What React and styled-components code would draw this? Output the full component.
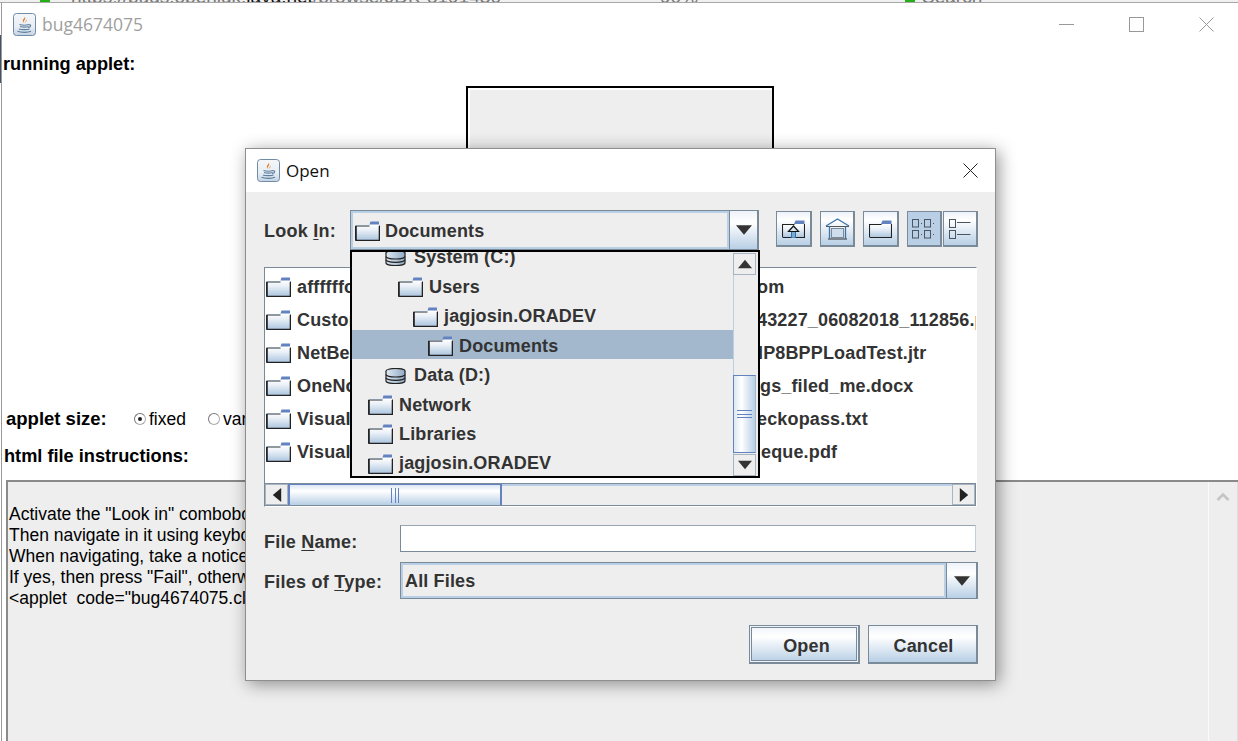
import React from "react";
import styled, { createGlobalStyle } from "styled-components";

const GlobalStyle = createGlobalStyle`
  html, body {
    margin: 0;
    padding: 0;
    background: #fff;
  }
  * {
    box-sizing: border-box;
  }
`;

const Desktop = styled.div`
  position: relative;
  width: 1238px;
  height: 741px;
  overflow: hidden;
  display: flex;
  flex-direction: column;
  background: #fff;
  font-family: "Liberation Sans", Arial, sans-serif;
`;

const BrowserStrip = styled.div`
  height: 3px;
  flex: none;
  overflow: hidden;
  display: flex;
  align-items: flex-end;
  background: #f0f0f0;
  border-bottom: 1px solid #a8a8a8;
  font-size: 19px;
  line-height: 20px;
  white-space: nowrap;
`;

const StripCell = styled.span`
  flex: none;
  width: ${(p) => p.$width}px;
  margin-bottom: -5px;
  color: #777;

  b {
    font-weight: 400;
    color: #111;
  }
`;

const StripMark = styled.span`
  flex: none;
  width: ${(p) => p.$width}px;
  height: 3px;
  margin-right: ${(p) => p.$after}px;
  background: #22b014;
`;

const WindowRow = styled.div`
  flex: 1;
  min-height: 0;
  display: flex;
`;

const Gutter = styled.div`
  width: 1px;
  flex: none;
  background: linear-gradient(#fff 32px, #3f5468 32px, #3f5468 80px, #fff 80px);
`;

const AppWindow = styled.div`
  flex: 1;
  min-width: 0;
  display: flex;
  flex-direction: column;
  border-left: 1px solid #9a9a9a;
  background: #fff;
`;

const TitleBar = styled.div`
  height: 44px;
  flex: none;
  display: flex;
  align-items: center;
  padding: 0 0 0 11px;
  margin-top: -1px;
`;

const TitleText = styled.span`
  font-family: "Open Sans", "Noto Sans", sans-serif;
  font-size: 17.5px;
  color: #a0a0a0;
  margin-left: 6px;
`;

const WindowControls = styled.div`
  margin-left: auto;
  display: flex;
  align-items: center;
  padding-right: 24px;
  gap: 55px;
`;

const Heading = styled.div`
  font-size: 18.2px;
  font-weight: 700;
  color: #000;
  line-height: 22px;
  padding-left: ${(p) => p.$left}px;
  margin-top: ${(p) => p.$top}px;
`;

const AppletFrame = styled.div`
  width: 308px;
  height: 230px;
  flex: none;
  margin: 11px 0 0 464px;
  border: 2px solid #000;
  padding: 2px 0 0 2px;
  background: #fff;
`;

const AppletInner = styled.div`
  width: 100%;
  height: 100%;
  background: #eee;
`;

const SizeRow = styled.div`
  display: flex;
  align-items: center;
  height: 22px;
  margin-top: 92px;
  padding-left: 4px;
  font-size: 17.5px;
  color: #000;
`;

const SizeLabel = styled.span`
  font-size: 18.5px;
  font-weight: 700;
  width: 128px;
`;

const RadioDot = styled.span`
  width: 12px;
  height: 12px;
  border-radius: 50%;
  border: 1px solid #aaa;
  border-top-color: #777;
  border-left-color: #777;
  margin-right: 3px;
  display: flex;
  align-items: center;
  justify-content: center;
  background: #fff;

  &::after {
    content: "";
    width: 4px;
    height: 4px;
    border-radius: 50%;
    background: ${(p) => (p.$on ? "#222" : "transparent")};
  }
`;

const RadioText = styled.span`
  width: ${(p) => p.$width}px;
`;

const InstructionsPane = styled.div`
  flex: 1;
  min-height: 0;
  display: flex;
  margin: 13px 0 0 4px;
  border: 2px solid #8a8a8a;
  border-right: none;
  border-bottom: none;
  background: #eee;
`;

const InstructionsText = styled.div`
  flex: 1;
  padding: 22px 0 0 1px;
  font-size: 17.5px;
  line-height: 20.9px;
  color: #000;
  white-space: pre;
`;

const PaneScroll = styled.div`
  width: 30px;
  flex: none;
  display: flex;
  justify-content: center;
  align-items: flex-start;
  padding-top: 10px;
  background: #eee;
  border-left: 1px solid #fafafa;
  border-right: 1px solid #ddd;
`;

const FileDialog = styled.div`
  position: absolute;
  left: 245px;
  top: 148px;
  width: 751px;
  height: 533px;
  display: flex;
  flex-direction: column;
  border: 1px solid #8e8e8e;
  background: #eee;
  box-shadow: 3px 3px 16px rgba(0, 0, 0, 0.42);
  color: #333;
  font-size: 18px;
  font-weight: 700;
  letter-spacing: 0.15px;
`;

const DialogTitle = styled.div`
  height: 43px;
  flex: none;
  display: flex;
  align-items: center;
  padding: 0 17px 0 11px;
  background: #fff;
  font-family: "Open Sans", "Noto Sans", sans-serif;
  font-size: 17px;
  font-weight: 400;
  letter-spacing: 0;
  color: #111;
`;

const DialogName = styled.span`
  margin-left: 6px;
  flex: 1;
`;

const DialogBody = styled.div`
  flex: 1;
  min-height: 0;
  display: flex;
  flex-direction: column;
  padding: 18px 17px 16px 18px;
`;

const LookRow = styled.div`
  position: relative;
  display: flex;
  align-items: flex-start;
  height: 40px;
`;

const FieldLabel = styled.label`
  width: ${(p) => p.$width}px;
  flex: none;
  line-height: ${(p) => p.$line}px;
  letter-spacing: 0.25px;
  white-space: nowrap;

  u {
    text-underline-offset: 2px;
  }
`;

const Combo = styled.div`
  display: flex;
  flex: none;
  width: ${(p) => p.$width}px;
  height: ${(p) => p.$height}px;
  border: 1px solid #7a8a99;
`;

const ComboValue = styled.div`
  flex: 1;
  min-width: 0;
  display: flex;
  align-items: center;
  gap: 5px;
  padding: 1px 0 0 2px;
  background: #eee;
  border: 2px solid #b8cfe5;
  line-height: 20px;
`;

const ComboArrow = styled.div`
  flex: none;
  width: ${(p) => p.$width}px;
  display: flex;
  align-items: center;
  justify-content: center;
  background: linear-gradient(#eef3f9, #ffffff 30%, #b8cfe5);
  border-left: 1px solid #7a8a99;
  border-right: 1px solid #7a8a99;
`;

const Toolbar = styled.div`
  display: flex;
  margin: 1px 0 0 17px;
  height: 36px;
`;

const ToolButton = styled.div`
  width: ${(p) => p.$width}px;
  height: 36px;
  margin-left: ${(p) => p.$gap ?? 8}px;
  display: flex;
  align-items: center;
  justify-content: center;
  border: 1px solid #7a8a99;
  border-right-width: 2px;
  border-bottom-width: 2px;
  background: ${(p) =>
    p.$active ? "#b8cfe5" : "linear-gradient(#eef3f9, #ffffff 25%, #b8cfe5)"};
`;

const PathPopup = styled.div`
  position: absolute;
  z-index: 2;
  left: 86px;
  top: 40px;
  width: 410px;
  height: 228px;
  display: flex;
  border: 2px solid #000;
  background: #eee;
  overflow: hidden;
`;

const PathList = styled.div`
  flex: 1;
  min-width: 0;
  margin-top: -10.4px;
`;

const PathRow = styled.div`
  height: 29.45px;
  display: flex;
  align-items: center;
  padding: 3px 0 0 ${(p) => 16 + p.$level * 15}px;
  gap: 6px;
  background: ${(p) => (p.$selected ? "#a3b8cc" : "transparent")};
`;

const IconSlot = styled.span`
  width: 25px;
  flex: none;
  display: flex;
  justify-content: center;
  align-items: center;
`;

const VerticalScroll = styled.div`
  width: 23px;
  flex: none;
  display: flex;
  flex-direction: column;
  margin-right: 2px;
  padding-top: 1px;
`;

const ScrollButton = styled.div`
  flex: none;
  display: flex;
  align-items: center;
  justify-content: center;
  height: ${(p) => p.$h || 22}px;
  width: ${(p) => p.$w || "100%"};
  background: #eee;
  border: 1px solid #fff;
  outline: 1px solid #a8b4c0;
  outline-offset: -1px;
`;

const ScrollTrack = styled.div`
  flex: 1;
  min-height: 0;
  display: flex;
  flex-direction: column;
  padding-top: 100px;
  background: #eee;
  border-left: 1px solid #b8cfe5;
`;

const VerticalThumb = styled.div`
  height: 78px;
  flex: none;
  margin-left: -1px;
  display: flex;
  align-items: center;
  justify-content: center;
  border: 1px solid #6382bf;
  border-right-color: #a3b8cc;
  background: linear-gradient(90deg, #dce7f3, #fff 35%, #b8cfe5);
`;

const GripV = styled.div`
  width: 15px;
  height: 8px;
  border-top: 1px solid #6382bf;
  border-bottom: 1px solid #6382bf;
  background: linear-gradient(#6382bf, #6382bf) center / 100% 1px no-repeat;
`;

const FileList = styled.div`
  height: 240px;
  flex: none;
  margin: 17px 1px 0 0;
  display: flex;
  flex-direction: column;
  border: 1px solid #7a8a99;
  border-right-color: #fff;
  border-bottom-color: #fff;
  background: #fff;
`;

const FileColumns = styled.div`
  flex: 1;
  min-height: 0;
  display: flex;
  overflow: hidden;
`;

const FileColumn = styled.div`
  width: ${(p) => p.$width}px;
  flex: none;
  padding-top: 2.5px;
`;

const FileRow = styled.div`
  height: 33px;
  display: flex;
  align-items: center;
  gap: 6px;
  padding-left: 1px;
  white-space: nowrap;
`;

const FileFragment = styled.span`
  margin-left: ${(p) => p.$shift}px;
`;

const HorizontalScroll = styled.div`
  height: 23px;
  flex: none;
  display: flex;
  border: 1px solid #7a8a99;
  border-left: none;
  background: #eee;
`;

const HorizontalThumb = styled.div`
  width: 214px;
  flex: none;
  display: flex;
  align-items: center;
  justify-content: center;
  border: 1px solid #6382bf;
  border-width: 1px 2px 0 2px;
  background: linear-gradient(#dce7f3, #fff 30%, #b8cfe5);
`;

const GripH = styled.div`
  width: 8px;
  height: 15px;
  border-left: 1px solid #6382bf;
  border-right: 1px solid #6382bf;
  background: linear-gradient(#6382bf, #6382bf) center / 1px 100% no-repeat;
`;

const TrackFill = styled.div`
  flex: 1;
  border-top: 2px solid #b8cfe5;
`;

const FormRow = styled.div`
  display: flex;
  align-items: flex-start;
  height: ${(p) => p.$height}px;
  margin-top: ${(p) => p.$top}px;
`;

const NameInput = styled.div`
  width: 576px;
  height: 27px;
  flex: none;
  background: #fff;
  border: 1px solid #7a8a99;
  border-top-color: #9aa6b2;
  border-right-color: #c4ced8;
`;

const ButtonRow = styled.div`
  margin-top: auto;
  display: flex;
  justify-content: flex-end;
  gap: 8px;
`;

const DialogButton = styled.div`
  width: ${(p) => p.$width}px;
  height: 39px;
  display: flex;
  align-items: center;
  justify-content: center;
  padding: 4px 0 0 ${(p) => p.$nudge}px;
  border: 1px solid #7a8a99;
  border-right-width: 2px;
  border-bottom-width: 2px;
  background: linear-gradient(#eef3f9, #ffffff 30%, #b8cfe5);
  box-shadow: ${(p) =>
    p.$primary ? "inset 0 0 0 1px #eef3f9, inset 0 0 0 2px #7a8a99" : "none"};
`;

const JavaIcon = () => (
  <svg width="23" height="23" viewBox="0 0 23 23">
    <defs>
      <linearGradient id="javaBg" x1="0" y1="0" x2="0" y2="1">
        <stop offset="0" stopColor="#f4f7fa" />
        <stop offset="0.6" stopColor="#e8eef4" />
        <stop offset="1" stopColor="#c3d3e3" />
      </linearGradient>
    </defs>
    <rect x="0.5" y="0.5" width="22" height="22" rx="3" fill="url(#javaBg)" stroke="#6f8ba6" />
    <path d="M11.5 3c1.5 2-2.6 3.2-1.4 5.6.4.8.9 1.2 1.1 1.9-.1-1.5-.8-2 .1-3.2.8-1.1 1.7-2.1.2-4.3z" fill="#e5771e" />
    <path d="M13.8 6.5c-1.3.9-1.5 1.7-.9 3.4.1-1.2.4-2.2.9-3.4z" fill="#e5771e" />
    <path d="M6.5 11.5c2.5.8 7 .8 9.5 0M7 13.5c2.3.6 6.3.6 8.5 0M16 11.8c2.2-.5 2.5 2-.8 3M6 16c2 .9 8.5 1 10.5 0M4.5 18.3c3.5 1.3 10.5 1.3 13.5 0" stroke="#5b7d9e" strokeWidth="1.2" fill="none" />
  </svg>
);

const MinimizeIcon = () => (
  <svg width="15" height="15" viewBox="0 0 15 15">
    <path d="M0 7.5h15" stroke="#999" fill="none" />
  </svg>
);

const MaximizeIcon = () => (
  <svg width="15" height="15" viewBox="0 0 15 15">
    <rect x="0.5" y="0.5" width="14" height="14" stroke="#999" fill="none" />
  </svg>
);

const CloseIcon = ({ color = "#999" }) => (
  <svg width="15" height="15" viewBox="0 0 15 15">
    <path d="M.5.5l14 14M14.5.5l-14 14" stroke={color} fill="none" />
  </svg>
);

const FolderIcon = () => (
  <svg width="25" height="20" viewBox="0 0 25 20">
    <defs>
      <linearGradient id="folderFill" x1="0" y1="0" x2="0" y2="1">
        <stop offset="0" stopColor="#ffffff" />
        <stop offset="0.35" stopColor="#eef3f9" />
        <stop offset="1" stopColor="#aec7e0" />
      </linearGradient>
    </defs>
    <path d="M1 5.5h13l2-3h8V19H1z" fill="url(#folderFill)" />
    <path d="M15.5 0.5h8.5v3h-9.5z" fill="#6382bf" />
    <path d="M.5 19V5h14" stroke="#333" fill="none" />
    <path d="M1 4.5h14" stroke="#8a99a8" fill="none" />
    <path d="M1 5v14.5h23.5V4" stroke="#222" strokeWidth="1.6" fill="none" />
    <path d="M14.5 4.5h10" stroke="#fff" fill="none" />
  </svg>
);

const DiskIcon = () => (
  <svg width="21" height="16" viewBox="0 0 21 16">
    <defs>
      <linearGradient id="diskFill" x1="0" y1="0" x2="1" y2="0">
        <stop offset="0" stopColor="#dfe8f2" />
        <stop offset="1" stopColor="#8faac6" />
      </linearGradient>
    </defs>
    <ellipse cx="10.5" cy="3" rx="9.5" ry="2.5" fill="url(#diskFill)" stroke="#222" strokeWidth="1.2" />
    <path d="M1 3V13c0 1.4 4.3 2.5 9.5 2.5S20 14.4 20 13V3" fill="url(#diskFill)" stroke="#222" strokeWidth="1.2" />
    <path d="M1 6.5c0 1.4 4.3 2.5 9.5 2.5S20 7.900 20 6.500M1 9.800c0 1.400 4.300 2.500 9.500 2.500S20 11.200 20 9.800" stroke="#222" strokeWidth="1.2" fill="none" />
  </svg>
);

const Triangle = ({ dir = "down", size = 10, color = "#333" }) => {
  const points = {
    down: "0,2 10,2 5,8",
    up: "0,8 10,8 5,2",
    left: "8,0 8,10 2,5",
    right: "2,0 2,10 8,5",
  };
  return (
    <svg width={size} height={size} viewBox="0 0 10 10">
      <polygon points={points[dir]} fill={color} />
    </svg>
  );
};

const UpFolderGlyph = () => (
  <svg width="23" height="18" viewBox="0 0 23 18">
    <path d="M1 5h12l2-1h7v13H1z" fill="url(#folderFill)" />
    <path d="M13.5 0.5H22.5V4H12z" fill="#6382bf" />
    <path d="M.5 17V4.5h12M.5 17.5h22V4" stroke="#222" strokeWidth="1.1" fill="none" />
    <path d="M9.5 11h4v7h-4z" fill="#7fa8cf" stroke="#2f6ea8" />
    <path d="M11.5 6l-5 5.500h10z" fill="#dbe7f2" stroke="#111" strokeWidth="1.2" />
  </svg>
);

const HomeGlyph = () => (
  <svg width="25" height="22" viewBox="0 0 25 22">
    <path d="M1 8L12.5 1 24 8" fill="none" stroke="#3d75a8" strokeWidth="1.3" />
    <path d="M1 8.5h23" stroke="#555" />
    <path d="M4.5 8.5V20.5M20.5 8.5V20.5" fill="none" stroke="#3d75a8" strokeWidth="1.3" />
    <rect x="6.5" y="10.5" width="12" height="9" fill="#cfdeec" stroke="#7a8a99" />
    <path d="M3 21h19" stroke="#333" />
  </svg>
);

const NewFolderGlyph = () => (
  <svg width="23" height="18" viewBox="0 0 23 18">
    <path d="M1 5h12l2-1h7v13H1z" fill="url(#folderFill)" />
    <path d="M13.5 0.5H22.5V4H12z" fill="#6382bf" />
    <path d="M.5 17V4.5h12M.5 17.5h22V4" stroke="#222" strokeWidth="1.1" fill="none" />
  </svg>
);

const ListGlyph = () => (
  <svg width="24" height="20" viewBox="0 0 24 20" fill="none">
    <rect x="0.5" y="0.5" width="6" height="7.5" stroke="#4a5560" />
    <rect x="12.5" y="0.5" width="6" height="7.5" stroke="#4a5560" />
    <rect x="0.5" y="11.5" width="6" height="7.5" stroke="#4a5560" />
    <rect x="12.5" y="11.5" width="6" height="7.5" stroke="#4a5560" />
    <path d="M9 4.5h1M21 4.5h1M9 15.5h1M21 15.5h1" stroke="#4a5560" />
  </svg>
);

const DetailsGlyph = () => (
  <svg width="22" height="20" viewBox="0 0 22 20" fill="none">
    <rect x="0.5" y="0.5" width="6" height="8" stroke="#4a5560" />
    <rect x="0.5" y="11.5" width="6" height="8" stroke="#4a5560" />
    <path d="M8 3.5h13.5M8 15.5h13.5" stroke="#4a5560" />
  </svg>
);

const instructions = `Activate the "Look in" combobox in the file chooser.
Then navigate in it using keyboard arrows.
When navigating, take a notice of the selection.
If yes, then press "Fail", otherwise press "Pass".
<applet  code="bug4674075.class" width=300 height=200></applet>`;

const pathItems = [
  { label: "System (C:)", level: 1, disk: true },
  { label: "Users", level: 2 },
  { label: "jagjosin.ORADEV", level: 3 },
  { label: "Documents", level: 4, selected: true },
  { label: "Data (D:)", level: 1, disk: true },
  { label: "Network", level: 0 },
  { label: "Libraries", level: 0 },
  { label: "jagjosin.ORADEV", level: 0 },
];

const folders = ["affffffolder", "CustomOffice", "NetBeansProjects", "OneNote", "Visual Studio", "Visual Studio"];
const files = [
  { name: "om", shift: -3 },
  { name: "43227_06082018_112856.pdf", shift: -3 },
  { name: "IP8BPPLoadTest.jtr", shift: -2 },
  { name: "gs_filed_me.docx", shift: 0 },
  { name: "eckopass.txt", shift: -3 },
  { name: "eque.pdf", shift: 1 },
];

export default function App() {
  return (
    <Desktop>
      <GlobalStyle />
      <BrowserStrip>
        <StripCell $width={40} />
        <StripMark $width={10} $after={21} />
        <StripCell $width={589}>
          https://bugs.openjdk.<b>java.net</b>/browse/JDK-8191436
        </StripCell>
        <StripCell $width={245}>90%</StripCell>
        <StripMark $width={10} $after={7} />
        <StripCell $width={100}>Search</StripCell>
      </BrowserStrip>

      <WindowRow>
        <Gutter />
        <AppWindow>
          <TitleBar>
            <JavaIcon />
            <TitleText>bug4674075</TitleText>
            <WindowControls>
              <MinimizeIcon />
              <MaximizeIcon />
              <CloseIcon />
            </WindowControls>
          </TitleBar>
          <Heading $top={7} $left={1}>running applet:</Heading>
          <AppletFrame>
            <AppletInner />
          </AppletFrame>
          <SizeRow>
            <SizeLabel>applet size:</SizeLabel>
            <RadioDot $on />
            <RadioText $width={59}>fixed</RadioText>
            <RadioDot />
            <RadioText $width={80}>variable</RadioText>
          </SizeRow>
          <Heading $top={15} $left={2}>html file instructions:</Heading>
          <InstructionsPane>
            <InstructionsText>{instructions}</InstructionsText>
            <PaneScroll>
              <svg width="14" height="10" viewBox="0 0 14 10">
                <path d="M1.5 8L7 2.5 12.5 8" fill="none" stroke="#c4c4c4" strokeWidth="2.5" />
              </svg>
            </PaneScroll>
          </InstructionsPane>
        </AppWindow>
      </WindowRow>

      <FileDialog>
        <DialogTitle>
          <JavaIcon />
          <DialogName>Open</DialogName>
          <CloseIcon color="#222" />
        </DialogTitle>
        <DialogBody>
          <LookRow>
            <FieldLabel $width={86} $line={43}>
              Look <u>I</u>n:
            </FieldLabel>
            <Combo $width={409} $height={40}>
              <ComboValue>
                <IconSlot>
                  <FolderIcon />
                </IconSlot>
                Documents
              </ComboValue>
              <ComboArrow $width={29}>
                <Triangle size={16} />
              </ComboArrow>
            </Combo>
            <Toolbar>
              <ToolButton $gap={0} $width={36}>
                <UpFolderGlyph />
              </ToolButton>
              <ToolButton $width={35}>
                <HomeGlyph />
              </ToolButton>
              <ToolButton $width={36}>
                <NewFolderGlyph />
              </ToolButton>
              <ToolButton $active $width={35}>
                <ListGlyph />
              </ToolButton>
              <ToolButton $width={35} $gap={1}>
                <DetailsGlyph />
              </ToolButton>
            </Toolbar>

            <PathPopup>
              <PathList>
                {pathItems.map((item, i) => (
                  <PathRow key={i} $level={item.level} $selected={item.selected}>
                    <IconSlot>{item.disk ? <DiskIcon /> : <FolderIcon />}</IconSlot>
                    {item.label}
                  </PathRow>
                ))}
              </PathList>
              <VerticalScroll>
                <ScrollButton>
                  <Triangle dir="up" size={14} />
                </ScrollButton>
                <ScrollTrack>
                  <VerticalThumb>
                    <GripV />
                  </VerticalThumb>
                </ScrollTrack>
                <ScrollButton>
                  <Triangle size={14} />
                </ScrollButton>
              </VerticalScroll>
            </PathPopup>
          </LookRow>

          <FileList>
            <FileColumns>
              <FileColumn $width={494}>
                {folders.map((name, i) => (
                  <FileRow key={i}>
                    <FolderIcon />
                    {name}
                  </FileRow>
                ))}
              </FileColumn>
              <FileColumn $width={220}>
                {files.map((file, i) => (
                  <FileRow key={i}>
                    <FileFragment $shift={file.shift}>{file.name}</FileFragment>
                  </FileRow>
                ))}
              </FileColumn>
            </FileColumns>
            <HorizontalScroll>
              <ScrollButton $w="23px" $h={21}>
                <Triangle dir="left" size={14} color="#222" />
              </ScrollButton>
              <HorizontalThumb>
                <GripH />
              </HorizontalThumb>
              <TrackFill />
              <ScrollButton $w="23px" $h={21}>
                <Triangle dir="right" size={14} color="#222" />
              </ScrollButton>
            </HorizontalScroll>
          </FileList>

          <FormRow $top={18} $height={27}>
            <FieldLabel $width={136} $line={35}>
              File <u>N</u>ame:
            </FieldLabel>
            <NameInput />
          </FormRow>
          <FormRow $top={10} $height={37}>
            <FieldLabel $width={136} $line={41}>
              Files of <u>T</u>ype:
            </FieldLabel>
            <Combo $width={578} $height={37}>
              <ComboValue>All Files</ComboValue>
              <ComboArrow $width={31}>
                <Triangle size={16} />
              </ComboArrow>
            </Combo>
          </FormRow>
          <ButtonRow>
            <DialogButton $primary $width={111} $nudge={5}>Open</DialogButton>
            <DialogButton $width={110} $nudge={2}>Cancel</DialogButton>
          </ButtonRow>
        </DialogBody>
      </FileDialog>
    </Desktop>
  );
}
